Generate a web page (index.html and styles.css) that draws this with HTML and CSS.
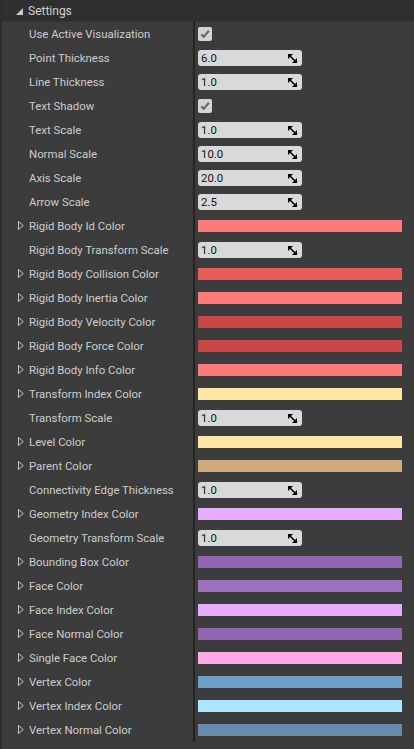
FILE: index.html
```html
<!DOCTYPE html>
<html>
<head>
<meta charset="utf-8">
<link rel="stylesheet" href="styles.css">
</head>
<body>
<div class="panel">
  <div class="header">
    <svg class="collapse" width="7" height="7" viewBox="0 0 7 7"><polygon points="7,0 7,7 0,7" fill="#c8c8c8"/></svg>
    <span>Settings</span>
  </div>
  <div class="rows" id="rows"></div>
</div>
<script src="app.js"></script>
</body>
</html>
```
FILE: app.js
```js
var rows = [
  ["Use Active Visualization", "check"],
  ["Point Thickness", "num", "6.0"],
  ["Line Thickness", "num", "1.0"],
  ["Text Shadow", "check"],
  ["Text Scale", "num", "1.0"],
  ["Normal Scale", "num", "10.0"],
  ["Axis Scale", "num", "20.0"],
  ["Arrow Scale", "num", "2.5"],
  ["Rigid Body Id Color", "color", "#ff7b7b"],
  ["Rigid Body Transform Scale", "num", "1.0"],
  ["Rigid Body Collision Color", "color", "#e85b5b"],
  ["Rigid Body Inertia Color", "color", "#ff7b7b"],
  ["Rigid Body Velocity Color", "color", "#c94646"],
  ["Rigid Body Force Color", "color", "#c94646"],
  ["Rigid Body Info Color", "color", "#ff7b7b"],
  ["Transform Index Color", "color", "#ffe6a2"],
  ["Transform Scale", "num", "1.0"],
  ["Level Color", "color", "#ffe6a2"],
  ["Parent Color", "color", "#cda97d"],
  ["Connectivity Edge Thickness", "num", "1.0"],
  ["Geometry Index Color", "color", "#e8acff"],
  ["Geometry Transform Scale", "num", "1.0"],
  ["Bounding Box Color", "color", "#9167b1"],
  ["Face Color", "color", "#9b72bd"],
  ["Face Index Color", "color", "#e8acff"],
  ["Face Normal Color", "color", "#9167b1"],
  ["Single Face Color", "color", "#ffaae6"],
  ["Vertex Color", "color", "#6d9fc8"],
  ["Vertex Index Color", "color", "#a9e6ff"],
  ["Vertex Normal Color", "color", "#668bae"]
];
var html = "";
var tri = '<svg class="expand" width="6" height="9" viewBox="0 0 6 9"><polygon points="0.5,0.5 5.2,4.5 0.5,8.5" fill="none" stroke="#c8c8c8" stroke-width="1"/></svg>';
var spin = '<svg class="spin" width="9" height="9" viewBox="0 0 9 9"><polygon points="0,0 5,0 0,5" fill="#000"/><polygon points="9,9 4,9 9,4" fill="#000"/><line x1="1" y1="1" x2="8" y2="8" stroke="#000" stroke-width="1.6"/></svg>';
var check = '<div class="checkbox"><svg width="14" height="14" viewBox="0 0 14 14"><polyline points="3.2,7.2 5.8,9.8 10.8,3.8" fill="none" stroke="#6a6a6a" stroke-width="2.2"/></svg></div>';
rows.forEach(function (r) {
  var v = "";
  if (r[1] === "check") v = check;
  else if (r[1] === "num") v = '<div class="spinbox"><span>' + r[2] + '</span>' + spin + '</div>';
  else v = '<div class="swatch" style="background:' + r[2] + '"></div>';
  html += '<div class="row"><div class="name">' + (r[1] === "color" ? tri : '<span class="notri"></span>') +
    '<span class="label">' + r[0] + '</span></div><div class="value">' + v + '</div></div>';
});
document.getElementById("rows").innerHTML = html;
```
FILE: styles.css
```css
html, body {
  margin: 0;
  padding: 0;
  background: #3c3c3c;
}
body {
  font-family: Roboto, "Liberation Sans", sans-serif;
  font-size: 11.4px;
  color: #cccccc;
  width: 414px;
  height: 749px;
  overflow: hidden;
}
.panel {
  border-left: 2px solid #2c2c2c;
  min-height: 749px;
  box-sizing: border-box;
}
.header {
  height: 21px;
  background: #2f2f2f;
  border-bottom: 1px solid #333;
  display: flex;
  align-items: center;
  padding-left: 14px;
  gap: 5px;
  font-size: 12px;
  color: #cfcfcf;
}
.collapse {
  margin-top: 1px;
}
.rows {
  display: flex;
  flex-direction: column;
}
.row {
  height: 24px;
  display: grid;
  grid-template-columns: 191px 2px 1fr;
}
.name {
  grid-column: 1;
  display: flex;
  align-items: center;
  padding-left: 16px;
  gap: 5px;
}
.row::after {
  content: "";
  grid-column: 2;
  grid-row: 1;
  background: #242424;
}
.expand, .notri {
  width: 6px;
  height: 9px;
  flex: none;
  margin-top: -1px;
}
.label {
  white-space: nowrap;
}
.value {
  grid-column: 3;
  grid-row: 1;
  display: flex;
  align-items: center;
  padding-left: 3px;
}
.checkbox {
  width: 14px;
  height: 14px;
  background: #d4d4d4;
  border-radius: 2px;
  display: flex;
}
.spinbox {
  width: 104px;
  height: 16px;
  box-sizing: border-box;
  background: #d9d9d9;
  border-radius: 3px;
  display: flex;
  align-items: center;
  justify-content: space-between;
  padding: 0 5px 0 3px;
  color: #111;
  font-size: 11.4px;
}
.swatch {
  width: 204px;
  height: 12px;
}
```
